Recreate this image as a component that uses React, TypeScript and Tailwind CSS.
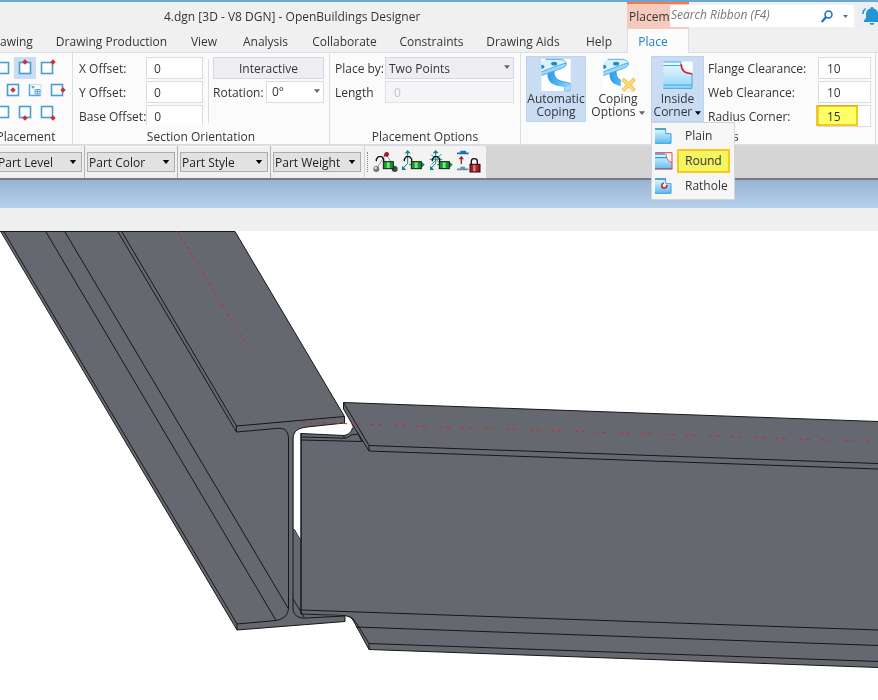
import type { ReactNode } from "react";
import clsx from "clsx";

const tabs = [
  { label: "awing", width: "w-[46px] pr-3.5" },
  { label: "Drawing Production", width: "w-[131px]" },
  { label: "View", width: "w-[54px]" },
  { label: "Analysis", width: "w-[69px]" },
  { label: "Collaborate", width: "w-[89px]" },
  { label: "Constraints", width: "w-[85px]" },
  { label: "Drawing Aids", width: "w-[98px]" },
  { label: "Help", width: "w-[54px]" },
];

const placementRows = [
  { offset: "-ml-2", points: [null, [7, 1], [13, 1]] },
  { offset: "ml-0.5", points: [[7, 7], "text", [13, 7]] },
  { offset: "-ml-2", points: [null, [7, 13], [13, 13]] },
] as const;

function Arrow({ className }: { className?: string }) {
  return (
    <svg viewBox="0 0 8 5" className={clsx("pointer-events-none", className)} aria-hidden="true">
      <path d="M0 0h8L4 5z" fill="currentColor" />
    </svg>
  );
}

function PlacementIcon({ point }: { point: "text" | null | readonly [number, number] }) {
  return (
    <svg viewBox="0 0 14 14" className="size-3.5 overflow-visible" aria-hidden="true">
      {point === "text" ? (
        <>
          <path d="M1.5 1v11.5H13" fill="none" stroke="#58a8d8" strokeWidth="1.5" />
          <path d="M2 1.5h11v11" fill="none" stroke="#c5dcea" />
          <path d="M3 3h4L5 6z" fill="#58a8d8" />
          <path d="M7 6.500h5v4.500H7zM7 8.700h5M9.500 6.500v4.500" fill="none" stroke="#58a8d8" />
        </>
      ) : (
        <rect x="1.5" y="1.5" width="11" height="11" fill="#fbfdff" stroke="#4a9fd2" strokeWidth="1.6" />
      )}
      {point && point !== "text" && (
        <path
          d="M0-2.7L2.7 0 0 2.7-2.7 0z"
          fill="#d22f35"
          transform={`translate(${point[0]} ${point[1]})`}
        />
      )}
    </svg>
  );
}

function CopingIcon({ cross = false }: { cross?: boolean }) {
  return (
    <svg viewBox="0 0 87 95" className="h-8 w-[30px] overflow-visible" aria-hidden="true">
      <defs>
        <linearGradient id={cross ? "webB" : "webA"} x1="0" x2="1">
          <stop offset="0" stopColor="#2d9be6" />
          <stop offset=".6" stopColor="#5bc0fb" />
          <stop offset="1" stopColor="#9bdcff" />
        </linearGradient>
      </defs>
      <rect width="87" height="95" fill="#fff" />
      <path
        d="M18 40l20-7c-1 13 2 24 14 30 10 5 22 6 34 9v23H69V83C52 80 35 78 26 68c-7-8-8-17-8-28z"
        fill={cross ? "url(#webB)" : "url(#webA)"}
      />
      <path d="M38 34c-1 13 2 23 14 29 10 5 22 6 34 9" fill="none" stroke="#1683c8" strokeWidth="2" />
      <path d="M69 83l17-10v22H69z" fill="#a5dfff" stroke="#4fb0e8" strokeWidth="1.5" />
      <path d="M0 8L13 1h45c10 2 18 7 16 15-1 6-7 9-12 11L0 49V38l14-5L0 33z" fill="#d8f1ff" />
      <path d="M0 38l60-22c5-2 10-4 15-3 0 7-6 11-13 14L0 49z" fill="#9bd8fb" />
      <path
        d="M13 1h45c10 2 18 7 16 15-1 6-7 9-12 11L0 49M0 38l59-22c6-2 11-3 15-3"
        fill="none"
        stroke="#3ba5de"
        strokeWidth="2.5"
      />
      <ellipse cx="38" cy="14" rx="9" ry="5.5" fill="#2387c7" />
      <path d="M0 17c5 0 9 2 9 6s-5 6-9 6z" fill="#2387c7" />
      {cross && (
        <>
          <rect x="52" y="60" width="35" height="35" fill="#fdfdfd" />
          <path d="M57 60l36 34M93 59L58 94" stroke="#f3b93f" strokeWidth="11" fill="none" />
          <path d="M58 61l34 32M92 60L59 93" stroke="#ffdb75" strokeWidth="7" fill="none" />
        </>
      )}
    </svg>
  );
}

function InsideCornerIcon() {
  return (
    <svg viewBox="0 0 90 86" className="h-7 w-[30px]" aria-hidden="true">
      <defs>
        <linearGradient id="corner" x1="0" y1="0" x2="0" y2="1">
          <stop offset="0" stopColor="#f2fbff" />
          <stop offset="1" stopColor="#8fd5fb" />
        </linearGradient>
      </defs>
      <path d="M54 2h36v38H54z" fill="#fff" />
      <path d="M0 2h54v12c0 16 14 26 34 26v44H0z" fill="url(#corner)" />
      <path d="M0 3h54v11H0M88 40v44H0M0 74h88" fill="none" stroke="#3fa6df" strokeWidth="3" />
      <path d="M55 10c0 19 13 29 34 29" fill="none" stroke="#cf2233" strokeWidth="5" />
    </svg>
  );
}

function CornerMenuIcon({ kind }: { kind: string }) {
  return (
    <svg viewBox="0 0 54 54" className="size-[18px] shrink-0" aria-hidden="true">
      <defs>
        <linearGradient id="menuSteel" x1="0" y1="0" x2="0" y2="1">
          <stop offset="0" stopColor="#e9f8ff" />
          <stop offset="1" stopColor="#5cbcf2" />
        </linearGradient>
      </defs>
      {kind === "Round" ? (
        <>
          <path d="M0 6h32c0 14 8 24 20 24v22H0z" fill="url(#menuSteel)" />
          <path d="M0 6h30M0 17h34M0 50h52" stroke="#2e9bd9" strokeWidth="4" />
          <path d="M0 2h51v49H0M33 5c1 14 6 24 18 26" fill="none" stroke="#e5484d" strokeWidth="3" />
        </>
      ) : (
        <>
          <path d="M0 5h32v15h16v29H0z" fill="url(#menuSteel)" />
          <path d="M0 6h32v14h16v29H0" fill="none" stroke="#36a1dd" strokeWidth="3" />
          <path d="M0 6h33" stroke="#2b93cf" strokeWidth="4" />
        </>
      )}
      {kind === "Rathole" && (
        <>
          <circle cx="28" cy="26" r="7" fill="#fff" />
          <path d="M26 18c-8 3-8 15 2 15 5 0 8-4 8-9" fill="none" stroke="#d3222c" strokeWidth="5" />
        </>
      )}
    </svg>
  );
}

function LockBody({ red = false }: { red?: boolean }) {
  return red ? (
    <>
      <path d="M43 45V34c0-11 18-11 18 0v11" fill="none" stroke="#111" strokeWidth="4" />
      <rect x="39" y="43" width="30" height="23" fill="#a51f27" stroke="#1c0a0b" strokeWidth="3" />
      <rect x="48" y="45" width="8" height="19" fill="#e66e70" />
    </>
  ) : (
    <>
      <path d="M10 34v-6l6-8h10l6 7v10" fill="none" stroke="#111" strokeWidth="4" />
      <rect x="31" y="35" width="30" height="21" fill="#189431" stroke="#10210f" strokeWidth="3" />
      <rect x="41" y="37" width="9" height="17" fill="#73e879" />
    </>
  );
}

function LockIcon({ kind }: { kind: "graph" | "axes" | "star" | "level" }) {
  return (
    <svg viewBox="0 0 75 72" className="h-6 w-[25px] overflow-visible" aria-hidden="true">
      {kind === "graph" && (
        <>
          <path d="M10 57L39 12l29 45" fill="none" stroke="#999" strokeWidth="3" />
          <circle cx="10" cy="57" r="9" fill="#777" />
          <circle cx="8" cy="54" r="4" fill="#ddd" />
          <circle cx="65" cy="57" r="9" fill="#444" />
          <path d="M30 19l12-12 3 12z" fill="#a31621" />
          <circle cx="41" cy="13" r="7" fill="#a31621" />
        </>
      )}
      {(kind === "axes" || kind === "star") && (
        <>
          <path d="M20 6v34L7 54M24 44h41" fill="none" stroke="#108080" strokeWidth="3" />
          <path d="M11 10l9-10 9 10zM62 35l9 9-9 9zM3 47v13h13z" fill="#108080" />
        </>
      )}
      {kind === "star" && <path d="M2 28h38M7 14l30 30M37 12L8 43" stroke="#2a9999" strokeWidth="3" />}
      {kind === "level" ? (
        <>
          <path d="M0 10h35M10 5h17" stroke="#1473b5" strokeWidth="5" />
          <path d="M13 42V25" stroke="#9f2822" strokeWidth="4" />
          <path d="M5 28l8-11 8 11z" fill="#9f2822" />
          <path d="M0 58h34M10 53h14" stroke="#718ba3" strokeWidth="5" />
          <LockBody red />
        </>
      ) : (
        <LockBody />
      )}
    </svg>
  );
}

function RibbonGroup({
  label,
  className,
  children,
}: {
  label: ReactNode;
  className: string;
  children: ReactNode;
}) {
  return (
    <section className={clsx("flex h-[91px] shrink-0 flex-col justify-between pt-1", className)}>
      <div className="flex items-start">{children}</div>
      <div className="h-[17px] text-center leading-[19px]">{label}</div>
    </section>
  );
}

function FieldRow({
  id,
  label,
  value,
  fieldClass,
  highlight = false,
}: {
  id: string;
  label: string;
  value: string;
  fieldClass: string;
  highlight?: boolean;
}) {
  return (
    <div className="flex h-[22px] items-center justify-between">
      <label htmlFor={id} className="pt-0.5 whitespace-nowrap">
        {label}
      </label>
      <div className="relative">
        <input
          id={id}
          defaultValue={value}
          className={clsx("block h-[22px] border border-[#d9dae4] bg-white outline-none", fieldClass)}
        />
        {highlight && (
          <span className="pointer-events-none absolute top-0 -left-0.5 h-[21px] w-[42px] border-2 border-[#f7c81e] bg-[#ffff66] mix-blend-multiply" />
        )}
      </div>
    </div>
  );
}

function TitleBar() {
  return (
    <header className="flex h-[29px] border-t-2 border-[#67a9d4] bg-[#f0f0f0]">
      <h1 className="w-[627px] shrink-0 pl-[164px] leading-[30px]">
        4.dgn [3D - V8 DGN] - OpenBuildings Designer
      </h1>
      <div className="w-[62px] shrink-0 overflow-hidden border-t-2 border-[#ff7643] bg-[#f6cbbd] pl-0.5 leading-[26px]">
        Placem
      </div>
      <div className="relative z-10 mt-[3px] -ml-[19px] flex h-[22px] flex-1 items-center bg-white pr-1.5 pl-px">
        <input
          aria-label="Search Ribbon"
          placeholder="Search Ribbon (F4)"
          className="h-5 min-w-0 flex-1 pb-1 italic outline-none placeholder:text-[#777]"
        />
        <button aria-label="Search" className="mr-2.5">
          <svg viewBox="0 0 12 13" className="h-[13px] w-3" fill="none" stroke="#1672c4" aria-hidden="true">
            <circle cx="7.5" cy="4.5" r="3.5" strokeWidth="1.5" />
            <path d="M5 7L.8 12" strokeWidth="2.2" />
          </svg>
        </button>
        <Arrow className="h-[3px] w-[5px] text-[#666]" />
      </div>
      <button aria-label="Notifications" className="ml-1 w-5 shrink-0 overflow-hidden bg-[#eceef3] pl-1">
        <svg viewBox="0 0 20 20" className="h-5 w-5" fill="#2694d1" aria-hidden="true">
          <path d="M10 1c1 0 1.500.7 1.500 1.500C14.500 3.200 16 5.500 16 8v4l2 2.500V16H2v-1.500L4 12V8c0-2.500 1.500-4.800 4.500-5.500C8.500 1.700 9 1 10 1zM7.500 17h5c-.4 1.300-1.300 2-2.500 2s-2.100-.7-2.500-2z" />
          <path d="M3.500 2.500C1.800 4 1 5.800.8 8M16.500 2.500c1.700 1.500 2.500 3.300 2.700 5.500" fill="none" stroke="#2694d1" strokeWidth="1.600" />
        </svg>
      </button>
    </header>
  );
}

function TabBar() {
  return (
    <nav className="flex h-6 border-b border-[#dcdee6] bg-[#f0f0f0]">
      {tabs.map((tab) => (
        <button key={tab.label} className={clsx("shrink-0 pt-0.5 text-center whitespace-nowrap", tab.width)}>
          {tab.label}
        </button>
      ))}
      <button className="-mb-px ml-px w-[62px] shrink-0 border-x border-[#dcdee6] bg-[#fbfbfc] pt-px pr-2.5 text-[#2080c5]">
        Place
      </button>
    </nav>
  );
}

function CornerMenu() {
  return (
    <div
      role="menu"
      className="absolute top-full left-0 z-20 flex w-[84px] flex-col border border-[#d3d5de] bg-[#f6f6f7] pb-px"
    >
      {["Plain", "Round", "Rathole"].map((kind) => (
        <button key={kind} role="menuitem" className="flex h-[25px] items-center gap-1 pt-px pl-[3px]">
          <CornerMenuIcon kind={kind} />
          <span
            className={clsx(
              "border-2 pl-1.5 text-left leading-5",
              kind === "Round" ? "w-[53px] border-[#f7c81e] bg-[#f5f560]" : "border-transparent"
            )}
          >
            {kind}
          </span>
        </button>
      ))}
    </div>
  );
}

function Ribbon() {
  return (
    <div className="flex border-b-2 border-[#dcdde4] bg-[#fbfbfc]">
      <RibbonGroup
        className="w-[73px] overflow-hidden border-r border-[#dcdee6]"
        label={<span className="-ml-2 block w-[68px]">Placement</span>}
      >
        <div className="w-full overflow-hidden">
          {placementRows.map((row, r) => (
            <div key={r} className={clsx("flex", row.offset)}>
              {row.points.map((point, i) => (
                <button
                  key={i}
                  aria-label={`Placement point ${r * 3 + i + 1}`}
                  className={clsx(
                    "flex size-[22px] shrink-0 items-center justify-center",
                    r === 0 && i === 1 && "bg-[#c9dcf4]"
                  )}
                >
                  <PlacementIcon point={point} />
                </button>
              ))}
            </div>
          ))}
        </div>
      </RibbonGroup>

      <RibbonGroup className="w-[257px] border-r border-[#dcdee6]" label="Section Orientation">
        <div className="ml-1.5 flex h-[68px] w-[124px] flex-col gap-0.5 overflow-hidden">
          <FieldRow id="x-offset" label="X Offset:" value="0" fieldClass="w-[57px] pl-[7px]" />
          <FieldRow id="y-offset" label="Y Offset:" value="0" fieldClass="w-[57px] pl-[7px]" />
          <FieldRow id="base-offset" label="Base Offset:" value="0" fieldClass="w-[57px] pl-[7px]" />
        </div>
        <div className="mt-0.5 ml-[5px] h-16 border-l border-[#dcdee6]" />
        <div className="ml-1 flex w-[111px] flex-col gap-0.5">
          <button className="h-[22px] border border-[#d6d7e2] bg-[#ededf2] pt-px leading-5">Interactive</button>
          <div className="flex items-center justify-between">
            <label htmlFor="rotation" className="pt-0.5">
              Rotation:
            </label>
            <div className="relative">
              <select
                id="rotation"
                className="block h-[22px] w-[58px] appearance-none border border-[#d9dae4] bg-white pl-[5px] outline-none"
              >
                <option>0°</option>
              </select>
              <Arrow className="absolute top-2 right-1 h-1 w-1.5 text-[#666]" />
            </div>
          </div>
        </div>
      </RibbonGroup>

      <RibbonGroup className="w-[191px] border-r border-[#dcdee6]" label="Placement Options">
        <div className="ml-[5px] flex w-[179px] flex-col gap-0.5">
          <div className="flex items-center justify-between">
            <label htmlFor="place-by" className="pt-0.5">
              Place by:
            </label>
            <div className="relative">
              <select
                id="place-by"
                className="block h-[22px] w-[129px] appearance-none border border-[#d6d7e2] bg-[#ededf2] pt-px pl-[3px] outline-none"
              >
                <option>Two Points</option>
              </select>
              <Arrow className="absolute top-2 right-1 h-1 w-1.5 text-[#666]" />
            </div>
          </div>
          <div className="flex items-center justify-between">
            <label htmlFor="length" className="pt-0.5">
              Length
            </label>
            <input
              id="length"
              disabled
              defaultValue="0"
              className="h-[22px] w-[129px] border border-[#e1e2e8] bg-[#f5f5f7] pl-2 text-[#c6c6ca]"
            />
          </div>
        </div>
      </RibbonGroup>

      <RibbonGroup
        className="w-[355px] border-r border-[#dcdee6]"
        label={<span className="block pl-[212px] text-left">s</span>}
      >
        <button className="-mt-px ml-[5px] flex h-[66px] w-[60px] flex-col items-center border border-[#bfd3ee] bg-[#c9dcf4] pt-0.5 leading-[13px]">
          <CopingIcon />
          <span className="pt-px">
            Automatic
            <br />
            Coping
          </span>
        </button>
        <button className="-mt-px ml-px flex h-[66px] w-[62px] flex-col items-center pt-[3px] leading-[13px]">
          <CopingIcon cross />
          <span className="pt-px whitespace-nowrap">
            Coping
            <br />
            Options <Arrow className="inline h-1 w-1.5 text-[#666]" />
          </span>
        </button>
        <div className="relative -mt-px ml-0.5">
          <button
            aria-haspopup="menu"
            className="flex h-[66px] w-[53px] flex-col items-center border border-[#bfd3ee] bg-[#c9dcf4] pt-1 leading-[13px] whitespace-nowrap"
          >
            <InsideCornerIcon />
            <span className="pt-[3px]">
              Inside
              <br />
              Corner <Arrow className="inline h-1 w-1.5 text-black" />
            </span>
          </button>
          <CornerMenu />
        </div>
        <div className="ml-1 flex h-[68px] w-[163px] flex-col gap-0.5">
          <FieldRow id="flange" label="Flange Clearance:" value="10" fieldClass="w-[53px] pl-2" />
          <FieldRow id="web" label="Web Clearance:" value="10" fieldClass="w-[53px] pl-2" />
          <FieldRow id="radius" label="Radius Corner:" value="15" fieldClass="w-[53px] pl-2" highlight />
        </div>
      </RibbonGroup>
    </div>
  );
}

function PartSelect({ label, className }: { label: string; className: string }) {
  return (
    <div className="relative mr-[5px] flex items-center">
      <select
        aria-label={label}
        className={clsx(
          "h-5 appearance-none border border-[#adadad] bg-[#e2e2e2] pt-px text-[#222] outline-none",
          className
        )}
      >
        <option>{label}</option>
      </select>
      <Arrow className="absolute right-[5px] h-1 w-2 text-black" />
    </div>
  );
}

function PartToolbar() {
  return (
    <div className="flex h-8 bg-[#d5d5d5]">
      <div className="flex bg-[#f0f0f0] shadow-[inset_0_1px_0_#f8f8f8]">
        <PartSelect label="Part Level" className="-ml-1 w-[86px] pl-px" />
        <div className="-ml-[3px] flex border-l border-[#b5b5b5] pl-0.5">
          <PartSelect label="Part Color" className="w-[88px] pl-px" />
        </div>
        <div className="-ml-[3px] flex border-l border-[#b5b5b5] pl-0.5">
          <PartSelect label="Part Style" className="w-[88px] pl-px" />
        </div>
        <div className="-ml-[3px] flex border-l border-[#b5b5b5] pl-0.5">
          <PartSelect label="Part Weight" className="w-[88px] pl-px" />
        </div>
      </div>
      <div className="-ml-0.5 flex items-center gap-[3px] border-l border-[#d5d5d5] bg-[#f3f3f3] pr-1">
        <div className="mx-0.5 h-5 border-l border-dotted border-[#888]" />
        {(["graph", "axes", "star", "level"] as const).map((kind) => (
          <button key={kind} aria-label={`${kind} lock`}>
            <LockIcon kind={kind} />
          </button>
        ))}
      </div>
    </div>
  );
}

// 3D view of the two steel beams, drawn in window coordinates
function ModelView() {
  return (
    <svg viewBox="0 231 878 469" className="block w-full bg-white" role="img" aria-label="Coped beam connection">
      <g fill="#666870">
        <path d="M1 231.500H235L344.500 416.500V423L307 427C298 428 294 431 293.500 438V529L301 542V614L350 616L345 616.500V621.500L237 630z" />
        <path d="M343.500 402.500L878 421.500V667.500L369 649.500L353 620Q351 616 345 615.500L301 614V433.500L344 435.500Q352 434 352.500 427L351 422L343.500 409z" />
      </g>
      <g fill="none" stroke="#161719" strokeWidth="1">
        <path d="M0 231.500H235L344.500 416.500V423L307 427C298 428 293.500 431 293 438V608C293 615 298 618.500 306 618L345 616" />
        <path d="M345 616.500V621.500L237 630L1 232M4 232L237 624V630M237 624L276 620.500C284 619 288.500 615 288.500 607V438C288 430 284 427.500 276 428.500L236.500 432V426L344.500 416.500" />
        <path d="M46 232L276 620.500M65 232L288 608M118 232L236.500 432M122 232L236.500 426" />
        <path d="M294 529L301 541M293 599L304 617" />
        <path d="M343.500 402.500L878 421.500M343.500 402.500V409L351 422L369 451M343.500 402.500L369 445.500V451M369 445.500L878 463.500M369 451L878 469" />
        <path d="M301 433.500L344 435.500Q351 434.500 352.500 428M301 437L340 438Q347 439 351 435L358 434L362 441.500M301 440L362 441.500M344 435.500V438" />
        <path d="M301 610L878 630M301 614L345 615.500Q351 616 353 620L369 649.500M348 616Q353 617 357 624L369 643.500V649.500M356 627L878 645.500M369 643.500L878 661.500M369 649.500L878 667.500" />
        <path d="M301 433V614" strokeWidth="1.500" />
      </g>
      <g fill="none" stroke="#dc2026">
        <path d="M178 231.500L247 346" strokeDasharray="3 3 2 4" />
        <path d="M250 351L258 365" strokeDasharray="1 4" />
        <path d="M302 422.500L360 424" strokeDasharray="3 4" />
        <path d="M371 424.500L870 441.500" strokeDasharray="3 4 3 14 3 4 3 11" />
      </g>
    </svg>
  );
}

export default function App() {
  return (
    <main className="min-h-screen overflow-hidden bg-white font-['Open_Sans','Noto_Sans',sans-serif] text-[12px] text-[#353535]">
      <TitleBar />
      <TabBar />
      <Ribbon />
      <PartToolbar />
      <div className="h-[30px] border-t-2 border-[#747b82] bg-linear-to-b from-[#97b4d3] to-[#b7d0eb]" />
      <div className="h-[23px] bg-[#efefef]" />
      <ModelView />
    </main>
  );
}
